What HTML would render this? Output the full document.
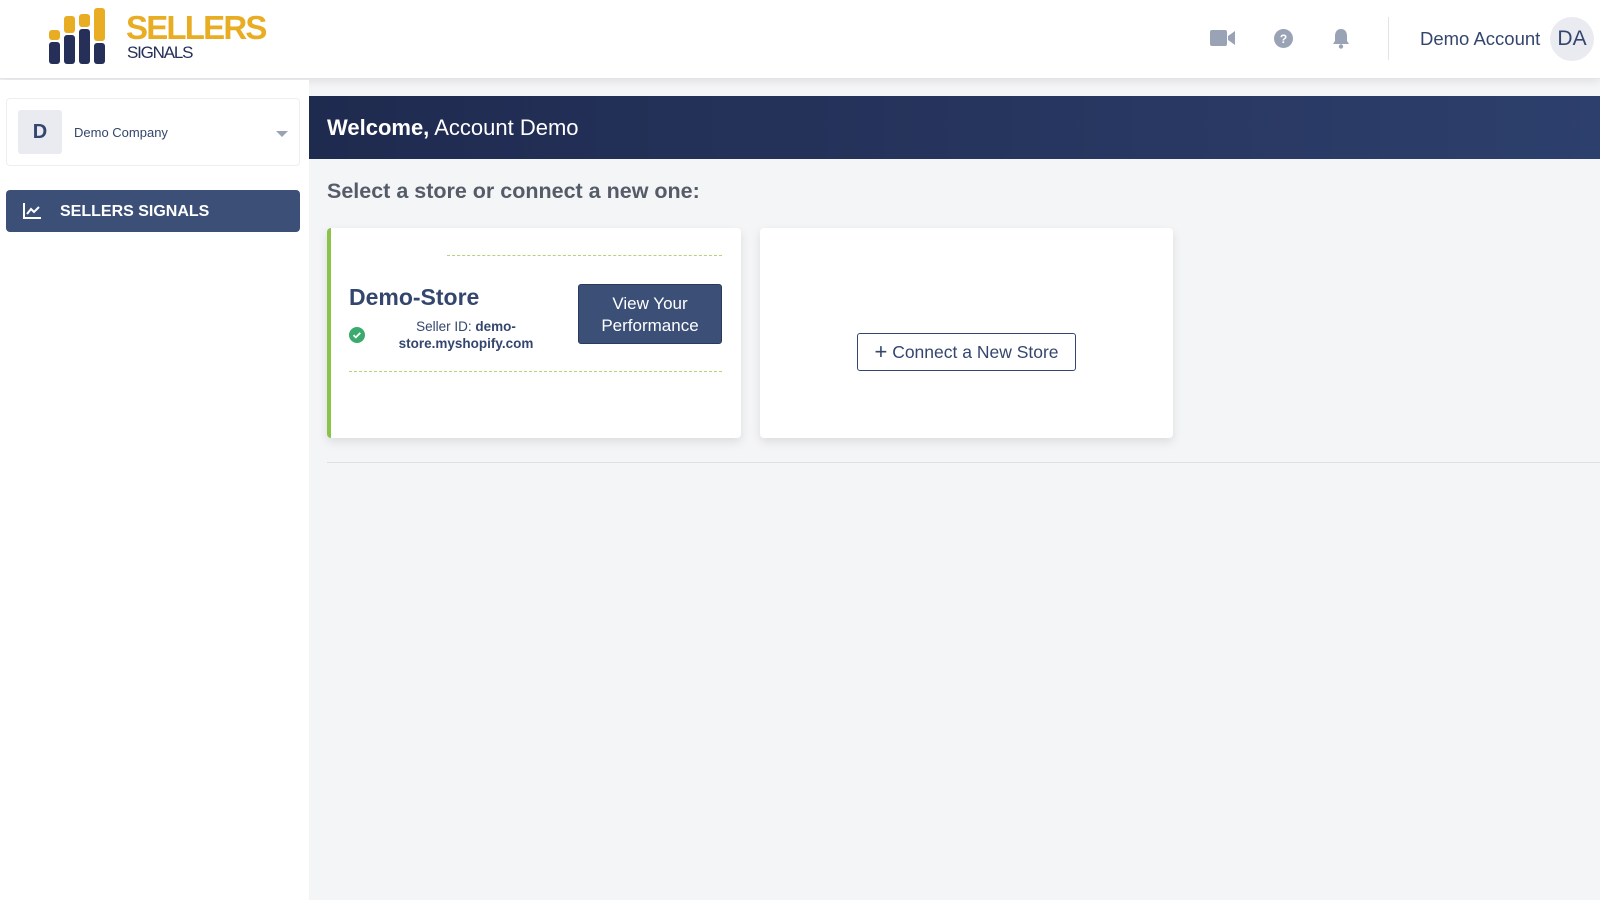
<!DOCTYPE html>
<html><head><meta charset="utf-8"><style>
*{box-sizing:border-box;margin:0;padding:0}
body{width:1600px;height:900px;background:#f4f5f7;font-family:"Liberation Sans",sans-serif;position:relative;overflow:hidden;color:#34466e}
.abs{position:absolute}
</style></head><body>
<div class="abs" style="left:0;top:0;width:1600px;height:79px;background:#fff;border-bottom:1px solid #e2e4e8;box-shadow:0 3px 8px rgba(0,0,0,.08)"></div>
<!-- logo -->
<div class="abs" style="left:49px;top:42px;width:11px;height:22px;background:#252f58;border-radius:3px"></div>
<div class="abs" style="left:49px;top:30px;width:11px;height:10px;background:#e8ad22;border-radius:3px"></div>
<div class="abs" style="left:64px;top:35px;width:11px;height:29px;background:#252f58;border-radius:3px"></div>
<div class="abs" style="left:64px;top:16px;width:11px;height:17px;background:#e8ad22;border-radius:3px"></div>
<div class="abs" style="left:79px;top:29px;width:11px;height:35px;background:#252f58;border-radius:3px"></div>
<div class="abs" style="left:79px;top:14px;width:11px;height:13px;background:#e8ad22;border-radius:3px"></div>
<div class="abs" style="left:94px;top:43px;width:11px;height:21px;background:#252f58;border-radius:3px"></div>
<div class="abs" style="left:94px;top:8px;width:11px;height:33px;background:#e8ad22;border-radius:3px"></div>
<div class="abs" style="left:126px;top:10px;font-size:33px;font-weight:bold;color:#e8ad22;letter-spacing:-1.8px;line-height:36px">SELLERS</div>
<div class="abs" style="left:127px;top:44px;font-size:17px;color:#252f58;letter-spacing:-1.2px;line-height:18px">SIGNALS</div>
<!-- header icons -->
<svg class="abs" style="left:1210px;top:29px" width="26" height="18" viewBox="0 0 26 18"><rect x="0" y="1" width="17" height="16" rx="2" fill="#9aa3b5"/><path d="M18 7l7-5v14l-7-5z" fill="#9aa3b5"/></svg>
<svg class="abs" style="left:1274px;top:29px" width="19" height="19" viewBox="0 0 19 19"><circle cx="9.5" cy="9.5" r="9.5" fill="#9aa3b5"/><text x="9.5" y="14" font-size="12" font-weight="bold" text-anchor="middle" fill="#fff" font-family="Liberation Sans">?</text></svg>
<svg class="abs" style="left:1332px;top:28px" width="18" height="21" viewBox="0 0 18 21"><path d="M9 1c-4 0-6 3-6 7v5l-2 3h16l-2-3V8c0-4-2-7-6-7z" fill="#9aa3b5"/><circle cx="9" cy="18.5" r="2.2" fill="#9aa3b5"/></svg>
<div class="abs" style="left:1388px;top:17px;width:1px;height:43px;background:#e2e4e8"></div>
<div class="abs" style="left:1420px;top:27px;font-size:18.5px;color:#34466e;line-height:24px">Demo Account</div>
<div class="abs" style="left:1550px;top:17px;width:44px;height:44px;border-radius:50%;background:#e9ebf0;font-size:21px;color:#34466e;text-align:center;line-height:44px">DA</div>
<!-- sidebar -->
<div class="abs" style="left:0;top:80px;width:309px;height:820px;background:#fff"></div>
<div class="abs" style="left:6px;top:98px;width:294px;height:68px;border:1px solid #eceef1;border-radius:4px;background:#fff"></div>
<div class="abs" style="left:18px;top:110px;width:44px;height:44px;background:#e9ebf0;border-radius:3px;font-size:20px;font-weight:bold;text-align:center;line-height:44px;color:#34466e">D</div>
<div class="abs" style="left:74px;top:125px;font-size:13px;color:#34466e">Demo Company</div>
<div class="abs" style="left:276px;top:131px;width:0;height:0;border-left:6px solid transparent;border-right:6px solid transparent;border-top:6px solid #9aa3b5"></div>
<div class="abs" style="left:6px;top:190px;width:294px;height:42px;background:#3b4f77;border-radius:4px"></div>
<svg class="abs" style="left:23px;top:203px" width="18" height="16" viewBox="0 0 18 16"><path d="M1 0v15h17" stroke="#fff" stroke-width="2" fill="none"/><path d="M4 11l4-5 3 3 5-5" stroke="#fff" stroke-width="2" fill="none"/></svg>
<div class="abs" style="left:60px;top:203px;font-size:16px;font-weight:bold;color:#fff">SELLERS SIGNALS</div>
<!-- main -->
<div class="abs" style="left:309px;top:96px;width:1291px;height:63px;background:linear-gradient(90deg,#1f2a4f,#2d3f6c)"></div>
<div class="abs" style="left:327px;top:115px;font-size:22px;color:#fff"><b>Welcome,</b> Account Demo</div>
<div class="abs" style="left:327px;top:179px;font-size:21.5px;font-weight:bold;color:#555c68">Select a store or connect a new one:</div>
<div class="abs" style="left:327px;top:228px;width:414px;height:210px;background:#fff;border-left:4px solid #8bc34a;border-radius:4px;box-shadow:0 4px 10px rgba(0,0,0,.1)"></div>
<div class="abs" style="left:447px;top:255px;width:275px;border-top:1px dashed #b4d47a"></div>
<div class="abs" style="left:349px;top:284px;font-size:23px;font-weight:bold;color:#34466e">Demo-Store</div>
<svg class="abs" style="left:349px;top:327px" width="16" height="16" viewBox="0 0 16 16"><circle cx="8" cy="8" r="8" fill="#3aaa6e"/><path d="M4.5 8.2l2.3 2.2 4.5-4.5" stroke="#fff" stroke-width="1.8" fill="none"/></svg>
<div class="abs" style="left:386px;top:318px;width:160px;text-align:center;font-size:13.5px;line-height:17px;color:#34466e">Seller ID: <b>demo-<br>store.myshopify.com</b></div>
<div class="abs" style="left:578px;top:284px;width:144px;height:60px;background:#3b4f77;border-radius:3px;border:1px solid #2a3a5c;color:#fff;font-size:17px;line-height:22px;text-align:center;padding-top:8px">View Your<br>Performance</div>
<div class="abs" style="left:349px;top:371px;width:373px;border-top:1px dashed #b4d47a"></div>
<div class="abs" style="left:760px;top:228px;width:413px;height:210px;background:#fff;border-radius:4px;box-shadow:0 4px 10px rgba(0,0,0,.1)"></div>
<div class="abs" style="left:857px;top:333px;width:219px;height:38px;border:1px solid #34466e;border-radius:3px;background:#fff;font-size:17.5px;color:#34466e;line-height:36px;text-align:center"><span style="font-size:22px;vertical-align:-1px">+</span> Connect a New Store</div>
<div class="abs" style="left:327px;top:462px;width:1273px;height:1px;background:#dde0e5"></div>
</body></html>
